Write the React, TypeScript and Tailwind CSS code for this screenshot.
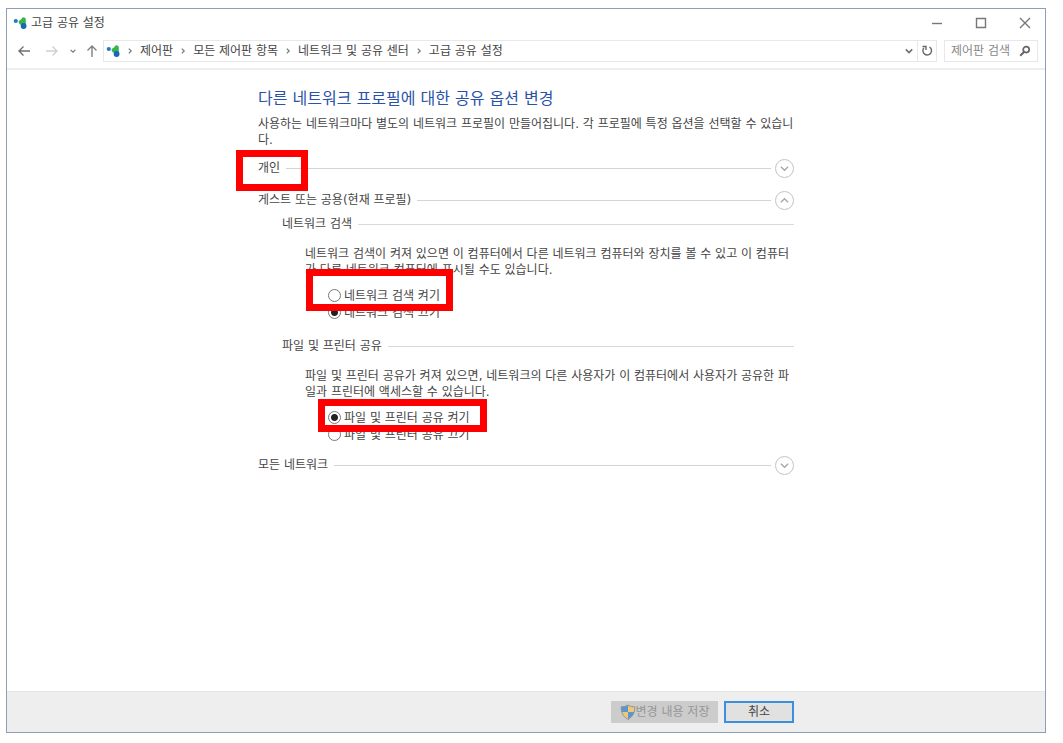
import type { ReactNode } from 'react';

const CRUMBS = ['제어판', '모든 제어판 항목', '네트워크 및 공유 센터', '고급 공유 설정'];

function NetworkIcon() {
  return (
    <svg viewBox="0 0 14 12" className="h-3 w-3.5 shrink-0" aria-hidden="true">
      <circle cx="2.8" cy="4" r="2.1" fill="#1f78c8" />
      <path d="M10.4 0.2 C12.2 0.2 12.8 1.2 12.8 2.8 V7.6 L9.8 8.8 C7.4 8 5.6 6.8 5.6 5 C5.6 3.4 7.6 3.2 8.4 2 C9 1.2 9.2 0.2 10.4 0.2 Z" fill="#35b54a" />
      <circle cx="10.6" cy="9" r="2.9" fill="#1668b8" />
    </svg>
  );
}

function Chevron({ className, d }: { className: string; d: string }) {
  return (
    <svg viewBox="0 0 10 10" className={className} fill="none" stroke="currentColor" aria-hidden="true">
      <path d={d} />
    </svg>
  );
}

function Arrow({ d }: { d: string }) {
  return (
    <svg viewBox="0 0 12 12" className="size-3" fill="none" stroke="currentColor" strokeWidth="1.4" aria-hidden="true">
      <path d={d} />
    </svg>
  );
}

function ShieldIcon() {
  return (
    <svg viewBox="0 0 16 16" className="size-4 shrink-0" aria-hidden="true">
      <clipPath id="shield">
        <path d="M8 1 C10 2.4 12.4 2.8 14.8 2.8 C15 8.6 12.8 12.8 8 15.4 C3.2 12.8 1 8.6 1.2 2.8 C3.6 2.8 6 2.4 8 1 Z" />
      </clipPath>
      <g clipPath="url(#shield)">
        <path d="M0 0h8v8H0z M8 8h8v8H8z" fill="#5b96cf" />
        <path d="M8 0h8v8H8z M0 8h8v8H0z" fill="#ecc878" />
      </g>
      <path d="M8 1 C10 2.4 12.4 2.8 14.8 2.8 C15 8.6 12.8 12.8 8 15.4 C3.2 12.8 1 8.6 1.2 2.8 C3.6 2.8 6 2.4 8 1 Z" fill="none" stroke="#8d9499" />
    </svg>
  );
}

// Red frame drawn over the page to point at a setting
function Highlight({ className }: { className: string }) {
  return <div className={`pointer-events-none absolute z-10 border-7 border-[#ff0000] ${className}`} />;
}

function ProfileRow({ title, open = false, children }: { title: string; open?: boolean; children?: ReactNode }) {
  return (
    <div className="relative flex h-5 items-center">
      <h2>{title}</h2>
      <div className="ml-1.5 h-px flex-1 bg-[#d4d4d4]" />
      <button
        type="button"
        aria-expanded={open}
        aria-label={title}
        className="ml-1 flex size-[19px] items-center justify-center rounded-full border border-[#c4c4c4] text-[#a8a8a8]"
      >
        <Chevron className="size-[9px] stroke-[1.5]" d={open ? 'M1 7 L5 3 L9 7' : 'M1 3 L5 7 L9 3'} />
      </button>
      {children}
    </div>
  );
}

type SettingProps = {
  name: string;
  title: string;
  description: ReactNode;
  options: string[];
  selected: number;
  children?: ReactNode;
};

function Setting({ name, title, description, options, selected, children }: SettingProps) {
  return (
    <section className="pl-6">
      <div className="flex h-4 items-center">
        <h3>{title}</h3>
        <div className="ml-1.5 h-px flex-1 bg-[#d9d9d9]" />
      </div>
      <p className="mt-3.5 pl-[23px] whitespace-nowrap">{description}</p>
      <div className="relative mt-[9px] pl-[46px]" role="radiogroup" aria-label={title}>
        {options.map((option, i) => (
          <label key={option} className="flex h-[17px] w-fit items-center gap-[3px]">
            <input
              type="radio"
              name={name}
              defaultChecked={i === selected}
              className="size-[13px] appearance-none rounded-full border border-[#777777] bg-white checked:bg-[radial-gradient(circle,#222222_3px,white_4px)]"
            />
            {option}
          </label>
        ))}
        {children}
      </div>
    </section>
  );
}

export default function App() {
  return (
    <div className="flex min-h-screen flex-col bg-white pt-2 pr-[17px] pb-2.5 pl-1.5 font-['DejaVu_Sans','Noto_Sans_CJK_KR',sans-serif] text-xs leading-4 text-[#454545]">
      <div className="flex flex-1 flex-col border border-[#8c9fb8] bg-white">
        <header className="border-b-2 border-[#eeeeee]">
          <div className="flex h-[27px] items-center pl-1.5">
            <NetworkIcon />
            <h1 className="ml-1 flex-1">고급 공유 설정</h1>
            <div className="flex items-center gap-8 pr-3.5 text-[#777777]">
              <button type="button" aria-label="최소화">
                <Arrow d="M1 6.5 H11" />
              </button>
              <button type="button" aria-label="최대화">
                <Arrow d="M1.5 1.5 H10.5 V10.5 H1.5 Z" />
              </button>
              <button type="button" aria-label="닫기">
                <Arrow d="M1 1 L11 11 M11 1 L1 11" />
              </button>
            </div>
          </div>

          <nav className="mb-0.5 flex h-[30px] items-center pr-[7px] pl-[11px]">
            <button type="button" aria-label="뒤로" className="text-[#707070]">
              <Arrow d="M12 6 H1 M5.5 1.5 L1 6 L5.5 10.5" />
            </button>
            <button type="button" aria-label="앞으로" className="ml-4 text-[#d0d0d0]">
              <Arrow d="M0 6 H11 M6.5 1.5 L11 6 L6.5 10.5" />
            </button>
            <button type="button" aria-label="최근 위치" className="ml-3 text-[#777777]">
              <Chevron className="size-1.5 stroke-2" d="M1 3 L5 7 L9 3" />
            </button>
            <button type="button" aria-label="위로" className="ml-2.5 text-[#808080]">
              <Arrow d="M6 12 V1 M1.5 5.5 L6 1 L10.5 5.5" />
            </button>
            <div className="ml-[5px] flex h-[22px] flex-1 items-center border border-[#e8e8e8] pl-0.5">
              <NetworkIcon />
              <ol className="flex flex-1 items-center">
                {CRUMBS.map(crumb => (
                  <li key={crumb} className="flex items-center">
                    <Chevron className="mx-[7px] size-1.5 stroke-2 text-[#777777]" d="M3 1 L7 5 L3 9" />
                    <a href="#">{crumb}</a>
                  </li>
                ))}
              </ol>
              <button type="button" aria-label="이전 위치" className="mr-1 text-[#707070]">
                <Chevron className="size-2 stroke-2" d="M1 3 L5 7 L9 3" />
              </button>
              <button type="button" aria-label="새로 고침" className="flex h-5 w-[19px] items-center justify-center border-l border-[#e8e8e8] text-[#666666]">
                <Arrow d="M1.5 1.5 H5 V5 M8.5 2 A4.3 4.3 0 1 1 2.8 3" />
              </button>
            </div>
            <div className="ml-[7px] flex h-[22px] w-[94px] items-center border border-[#e8e8e8] px-1.5">
              <input
                type="text"
                aria-label="제어판 검색"
                placeholder="제어판 검색"
                className="w-full min-w-0 outline-none placeholder:text-[#888888]"
              />
              <svg viewBox="0 0 12 12" className="size-3 shrink-0" fill="none" stroke="#666666" aria-hidden="true">
                <circle cx="7.2" cy="4.6" r="3" strokeWidth="1.7" />
                <path d="M5 7 L1.2 10.8" strokeWidth="2" />
              </svg>
            </div>
          </nav>
        </header>

        <main className="mx-auto w-[536px] flex-1 pt-[19px]">
          <h2 className="text-base leading-5 text-[#2a52a8]">다른 네트워크 프로필에 대한 공유 옵션 변경</h2>
          <p className="mt-[7px] whitespace-nowrap">
            사용하는 네트워크마다 별도의 네트워크 프로필이 만들어집니다. 각 프로필에 특정 옵션을 선택할 수 있습니
            <br />
            다.
          </p>
          <div className="mt-2.5 flex flex-col gap-3">
            <ProfileRow title="개인">
              <Highlight className="-top-2 -left-[22px] h-[41px] w-[72px]" />
            </ProfileRow>
            <div>
              <ProfileRow title="게스트 또는 공용(현재 프로필)" open />
              <div className="mt-1.5 flex flex-col gap-[17px]">
                <Setting
                  name="discovery"
                  title="네트워크 검색"
                  description={
                    <>
                      네트워크 검색이 켜져 있으면 이 컴퓨터에서 다른 네트워크 컴퓨터와 장치를 볼 수 있고 이 컴퓨터
                      <br />가 다른 네트워크 컴퓨터에 표시될 수도 있습니다.
                    </>
                  }
                  options={['네트워크 검색 켜기', '네트워크 검색 끄기']}
                  selected={1}
                >
                  <Highlight className="-top-[18px] left-6 h-[42px] w-[147px]" />
                </Setting>
                <Setting
                  name="sharing"
                  title="파일 및 프린터 공유"
                  description={
                    <>
                      파일 및 프린터 공유가 켜져 있으면, 네트워크의 다른 사용자가 이 컴퓨터에서 사용자가 공유한 파
                      <br />
                      일과 프린터에 액세스할 수 있습니다.
                    </>
                  }
                  options={['파일 및 프린터 공유 켜기', '파일 및 프린터 공유 끄기']}
                  selected={0}
                >
                  <Highlight className="-top-2.5 left-9 h-[33px] w-[169px]" />
                </Setting>
              </div>
            </div>
            <ProfileRow title="모든 네트워크" />
          </div>
        </main>

        <footer className="border-t border-[#e4e4e4] bg-[#eeeeee] py-[9px]">
          <div className="mx-auto flex w-[536px] justify-end gap-1.5">
            <button type="button" disabled className="flex h-[22px] w-[107px] items-center justify-center bg-[#cccccc] text-[#969696]">
              <ShieldIcon />
              변경 내용 저장
            </button>
            <button type="button" className="flex h-[22px] w-[70px] items-center justify-center border-2 border-[#3c8fdc] bg-[#e1e1e1]">
              취소
            </button>
          </div>
        </footer>
      </div>
    </div>
  );
}
